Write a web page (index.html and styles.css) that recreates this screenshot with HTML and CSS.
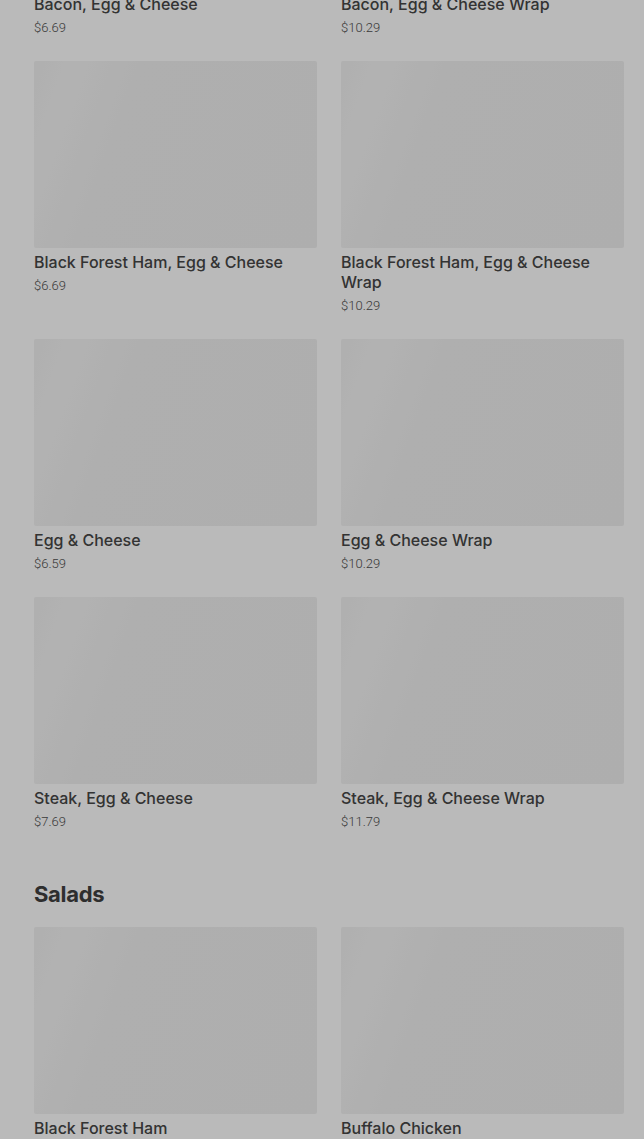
FILE: index.html
```html
<!DOCTYPE html>
<html lang="en">
<head>
    <meta charset="UTF-8">
    <meta name="viewport" content="width=device-width, initial-scale=1.0">
    <title>Menu</title>
    <link rel="stylesheet" href="styles.css">
</head>
<body>
    <main class="menu">
        <section class="category">
            <div class="grid">
                <div class="item">
                    <div class="thumb"></div>
                    <h3 class="name">Bacon, Egg &amp; Cheese</h3>
                    <p class="price">$6.69</p>
                </div>
                <div class="item">
                    <div class="thumb"></div>
                    <h3 class="name">Bacon, Egg &amp; Cheese Wrap</h3>
                    <p class="price">$10.29</p>
                </div>
                <div class="item">
                    <div class="thumb"></div>
                    <h3 class="name">Black Forest Ham, Egg &amp; Cheese</h3>
                    <p class="price">$6.69</p>
                </div>
                <div class="item">
                    <div class="thumb"></div>
                    <h3 class="name">Black Forest Ham, Egg &amp; Cheese Wrap</h3>
                    <p class="price">$10.29</p>
                </div>
                <div class="item">
                    <div class="thumb"></div>
                    <h3 class="name">Egg &amp; Cheese</h3>
                    <p class="price">$6.59</p>
                </div>
                <div class="item">
                    <div class="thumb"></div>
                    <h3 class="name">Egg &amp; Cheese Wrap</h3>
                    <p class="price">$10.29</p>
                </div>
                <div class="item">
                    <div class="thumb"></div>
                    <h3 class="name">Steak, Egg &amp; Cheese</h3>
                    <p class="price">$7.69</p>
                </div>
                <div class="item">
                    <div class="thumb"></div>
                    <h3 class="name">Steak, Egg &amp; Cheese Wrap</h3>
                    <p class="price">$11.79</p>
                </div>
            </div>
        </section>

        <section class="category">
            <h2 class="category-title">Salads</h2>
            <div class="grid">
                <div class="item">
                    <div class="thumb"></div>
                    <h3 class="name">Black Forest Ham</h3>
                    <p class="price">$9.49</p>
                </div>
                <div class="item">
                    <div class="thumb"></div>
                    <h3 class="name">Buffalo Chicken</h3>
                    <p class="price">$10.29</p>
                </div>
            </div>
        </section>
    </main>
    <div class="overlay"></div>
</body>
</html>
```

FILE: styles.css
```css
body {
    margin: 0;
    padding: 0;
    font-family: Inter, Roboto, "Liberation Sans", sans-serif;
    background-color: #fff;
    color: #464646;
    overflow: hidden;
}

/* page is scrolled down a little */
.menu {
    margin-top: -197px;
    padding: 0 20px 0 34px;
}

.category {
    margin-bottom: 49px;
}

.category-title {
    margin: 0 0 19px;
    font-size: 22px;
    line-height: 28px;
    font-weight: 700;
    color: #404040;
    letter-spacing: -0.3px;
}

.grid {
    display: grid;
    grid-template-columns: 1fr 1fr;
    column-gap: 24px;
    row-gap: 24px;
}

.thumb {
    height: 187px;
    background: linear-gradient(110deg, #f1f1f1 0%, #f5f5f5 12%, #f0f0f0 30%, #efefef 100%);
    border-radius: 2px;
}

.name {
    margin: 4px 0 0;
    font-size: 16px;
    line-height: 20px;
    font-weight: 500;
    color: #464646;
}

.price {
    margin: 5px 0 0;
    font-family: Roboto, "Liberation Sans", sans-serif;
    font-size: 13px;
    line-height: 18px;
    font-weight: 300;
    color: #505050;
}

.overlay {
    position: fixed;
    inset: 0;
    background-color: rgba(0, 0, 0, 0.27);
}
```
